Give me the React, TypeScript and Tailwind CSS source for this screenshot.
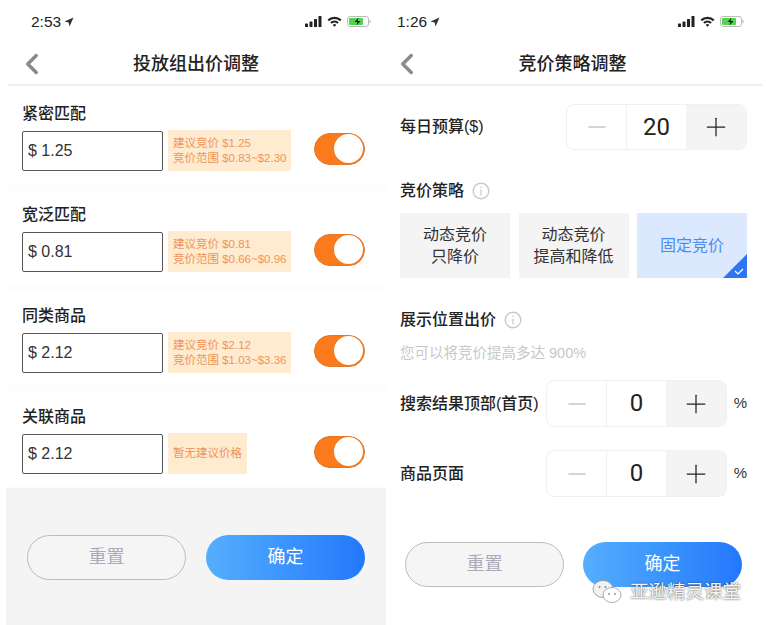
import { ChevronLeft, Minus, Plus } from 'lucide-react';

const font = { fontFamily: '"Liberation Sans", "Noto Sans CJK SC", sans-serif' };

function StatusBar({ time, pad }: { time: string; pad: string }) {
  return (
    <div className={`flex h-[42px] items-center justify-between ${pad}`}>
      <div className="flex items-center gap-[3px] pt-[1px]">
        <span className="text-[15.5px] font-medium text-[#222]">{time}</span>
        <svg width="10" height="10" viewBox="0 0 10 10" className="mt-[1px]">
          <path d="M9.5 .5 L.5 4.4 L4.6 5.4 L5.6 9.5 Z" fill="#333" />
        </svg>
      </div>
      <div className="flex items-center gap-[5px]">
        <svg width="17" height="11" viewBox="0 0 17 11">
          <rect x="0" y="7.5" width="3" height="3.5" rx=".6" fill="#222" />
          <rect x="4.5" y="5.5" width="3" height="5.5" rx=".6" fill="#222" />
          <rect x="9" y="3" width="3" height="8" rx=".6" fill="#222" />
          <rect x="13.5" y="0" width="3" height="11" rx=".6" fill="#222" />
        </svg>
        <svg width="15" height="11" viewBox="0 0 15 11">
          <path d="M.5 3.6 A10 10 0 0 1 14.5 3.6 L13 5.2 A8 8 0 0 0 2 5.2 Z" fill="#222" />
          <path d="M3.2 6.3 A6.2 6.2 0 0 1 11.8 6.3 L10.3 7.8 A4 4 0 0 0 4.7 7.8 Z" fill="#222" />
          <path d="M5.8 8.9 A2.4 2.4 0 0 1 9.2 8.9 L7.5 10.8 Z" fill="#222" />
        </svg>
        <svg width="24" height="11" viewBox="0 0 24 11">
          <rect x=".5" y=".5" width="21" height="10" rx="2.5" fill="#fff" stroke="#bbb" />
          <rect x="2" y="2" width="14" height="7" rx="1" fill="#52d44e" />
          <rect x="22.4" y="3.8" width="1.2" height="3.4" rx=".6" fill="#bbb" />
          <path d="M11.5 1.5 L7.5 6 H10.3 L9.5 9.5 L13.5 5 H10.7 Z" fill="#222" />
        </svg>
      </div>
    </div>
  );
}

function NavBar({ title, left }: { title: string; left: string }) {
  return (
    <div className={`relative flex h-[44px] items-center justify-center border-b-2 border-[#eeeeee] pt-[3px] ${left}`}>
      <ChevronLeft size={34} strokeWidth={2.4} className="absolute left-[7px] top-[5px] text-[#8a8a8a]" />
      <span className="text-[18px] font-medium text-[#222]">{title}</span>
    </div>
  );
}

function Toggle() {
  return (
    <div className="flex h-[32px] w-[51px] items-center justify-end rounded-full border border-[#e0782c] bg-[#fb7a1c] pr-[1px]">
      <div className="h-[29px] w-[29px] rounded-full bg-white" />
    </div>
  );
}

function BidRow({ label, price, tips }: { label: string; price: string; tips: string[] }) {
  return (
    <div className="flex h-[101px] flex-col pt-[5px]">
      <div className="pl-[22px] text-[16px] font-medium leading-[20px] text-[#222]">{label}</div>
      <div className="mt-[6px] flex items-center pl-[22px]">
        <div className="flex h-[40px] w-[141px] items-center rounded-[2px] border border-[#555] bg-white pl-[5px] text-[16px] text-[#333]">
          {price}
        </div>
        <div className="ml-[5px] flex h-[41px] flex-col justify-center bg-[#feebd0] px-[5px] text-[11.5px] leading-[15px] text-[#f0935a]">
          {tips.map((t) => (
            <div key={t} className="whitespace-nowrap">{t}</div>
          ))}
        </div>
        <div className="mb-[4px] ml-auto mr-[21px]">
          <Toggle />
        </div>
      </div>
      <div className="ml-[8px] mt-[12px] h-[8px] bg-[#fdfdfd]" />
    </div>
  );
}

function ActionButtons({ width }: { width: string }) {
  return (
    <div className="flex justify-between">
      <button className={`h-[45px] ${width} rounded-full border border-[#bdbdbd] bg-[#f5f5f5] text-[18px] text-[#a9abb8]`}>
        重置
      </button>
      <button className={`h-[45px] ${width} rounded-full bg-gradient-to-r from-[#55aefc] to-[#2378fb] text-[18px] text-white`}>
        确定
      </button>
    </div>
  );
}

function Stepper({ value, height, sideW }: { value: string; height: string; sideW: string }) {
  return (
    <div className={`flex ${height} w-[181px] overflow-hidden rounded-[8px] border border-[#f0f0f0] bg-white`}>
      <div className={`flex ${sideW} items-center justify-center border-r border-[#f0f0f0]`}>
        <Minus size={28} strokeWidth={1} className="text-[#aaaaaa]" />
      </div>
      <div className="flex flex-1 items-center justify-center pb-[1px] text-[24px] text-[#222]" style={{ fontFamily: 'Roboto, sans-serif' }}>
        {value}
      </div>
      <div className={`flex ${sideW} items-center justify-center bg-[#f4f4f4]`}>
        <Plus size={30} strokeWidth={1} className="text-[#222]" />
      </div>
    </div>
  );
}

function InfoIcon() {
  return (
    <svg width="18" height="18" viewBox="0 0 18 18">
      <circle cx="9" cy="9" r="7.8" fill="none" stroke="#c3c9d6" strokeWidth="1.4" />
      <rect x="8.4" y="7.5" width="1.2" height="6" fill="#c3c9d6" />
      <rect x="8.4" y="4.6" width="1.2" height="1.4" fill="#c3c9d6" />
    </svg>
  );
}

function StrategyCard({ lines, active }: { lines: string[]; active?: boolean }) {
  return (
    <div
      className={`relative flex h-[65px] w-[110px] flex-col items-center justify-center text-[16px] leading-[22px] ${
        active ? 'bg-[#dbe8fd] text-[#4a8df2]' : 'bg-[#f4f4f4] text-[#333]'
      }`}
    >
      {lines.map((l) => (
        <div key={l}>{l}</div>
      ))}
      {active && (
        <svg width="24" height="24" viewBox="0 0 24 24" className="absolute bottom-0 right-0">
          <path d="M24 0 V24 H0 Z" fill="#2f75f0" />
          <path d="M12 17 L15 20 L20 15" fill="none" stroke="#fff" strokeWidth="1.2" />
        </svg>
      )}
    </div>
  );
}

export default function App() {
  return (
    <div className="relative flex h-[625px] w-[766px] overflow-hidden bg-white" style={font}>
      {/* left phone */}
      <div className="flex w-[386px] flex-col">
        <StatusBar time="2:53" pad="pl-[31px] pr-[15px]" />
        <NavBar title="投放组出价调整" left="ml-[8px] pr-[2px]" />
        <div className="pt-[13px]">
          <BidRow label="紧密匹配" price="$ 1.25" tips={['建议竞价 $1.25', '竞价范围 $0.83~$2.30']} />
          <BidRow label="宽泛匹配" price="$ 0.81" tips={['建议竞价 $0.81', '竞价范围 $0.66~$0.96']} />
          <BidRow label="同类商品" price="$ 2.12" tips={['建议竞价 $2.12', '竞价范围 $1.03~$3.36']} />
          <div className="h-[86px] overflow-hidden">
            <BidRow label="关联商品" price="$ 2.12" tips={['暂无建议价格']} />
          </div>
        </div>
        <div className="ml-[6px] flex-1 bg-[#f4f4f4] pl-[21px] pr-[21px] pt-[47px]">
          <ActionButtons width="w-[159px]" />
        </div>
      </div>

      {/* right phone */}
      <div className="flex flex-1 flex-col">
        <StatusBar time="1:26" pad="pl-[11px] pr-[22px]" />
        <NavBar title="竞价策略调整" left="mr-[4px] -ml-[3px]" />
        <div className="flex flex-col pl-[14px] pr-[19px] pt-[18px]">
          <div className="flex items-center justify-between">
            <span className="text-[16px] font-medium text-[#222]">每日预算($)</span>
            <Stepper value="20" height="h-[46px]" sideW="w-[60px]" />
          </div>
          <div className="mt-[29px] flex items-center gap-[8px]">
            <span className="text-[16px] font-medium text-[#222]">竞价策略</span>
            <InfoIcon />
          </div>
          <div className="mt-[10px] flex justify-between">
            <StrategyCard lines={['动态竞价', '只降价']} />
            <StrategyCard lines={['动态竞价', '提高和降低']} />
            <StrategyCard lines={['固定竞价']} active />
          </div>
          <div className="mt-[30px] flex items-center gap-[8px]">
            <span className="text-[16px] font-medium text-[#222]">展示位置出价</span>
            <InfoIcon />
          </div>
          <div className="mt-[11px] text-[14.5px] leading-[20px] text-[#c6c8cc]">您可以将竞价提高多达 900%</div>
          <div className="mt-[17px] flex items-center">
            <span className="w-[146px] whitespace-nowrap text-[16px] font-medium text-[#222]">搜索结果顶部(首页)</span>
            <Stepper value="0" height="h-[47px]" sideW="w-[60px]" />
            <span className="ml-auto text-[15px] font-medium text-[#333]">%</span>
          </div>
          <div className="mt-[23px] flex items-center">
            <span className="w-[146px] text-[16px] font-medium text-[#222]">商品页面</span>
            <Stepper value="0" height="h-[47px]" sideW="w-[60px]" />
            <span className="ml-auto text-[15px] font-medium text-[#333]">%</span>
          </div>
          <div className="mt-[45px] pl-[5px] pr-[5px]">
            <ActionButtons width="w-[159px]" />
          </div>
        </div>
      </div>

      {/* wechat watermark */}
      <div className="absolute left-[590px] top-[579px] flex items-center gap-[6px]">
        <svg width="34" height="26" viewBox="0 0 34 26">
          <ellipse cx="13" cy="10" rx="10" ry="8.5" fill="#f2f2f2" stroke="#888" strokeWidth=".7" />
          <ellipse cx="22" cy="16" rx="9" ry="7.5" fill="#fff" stroke="#888" strokeWidth=".7" />
          <circle cx="9.5" cy="8" r="1" fill="#888" />
          <circle cx="15.5" cy="8" r="1" fill="#888" />
          <circle cx="19" cy="15" r=".9" fill="#888" />
          <circle cx="25" cy="15" r=".9" fill="#888" />
        </svg>
        <span className="whitespace-nowrap text-[18.5px] leading-[24px] text-[#f4f4f4] [text-shadow:0_0_2px_#333]">亚逊精灵课堂</span>
      </div>
    </div>
  );
}
